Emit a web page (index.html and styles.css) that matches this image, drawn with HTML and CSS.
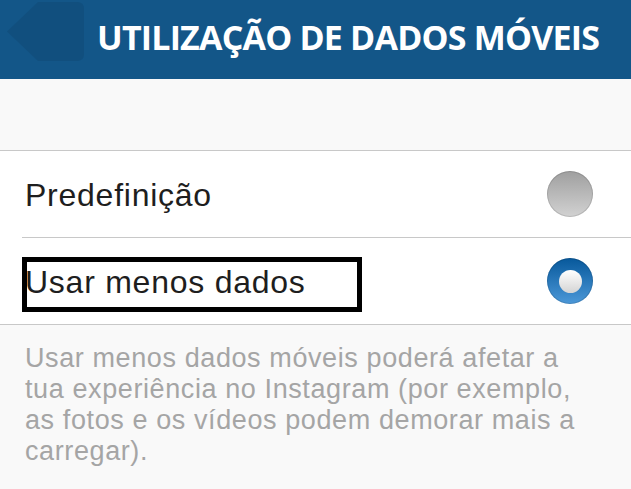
FILE: index.html
```html
<!DOCTYPE html>
<html lang="pt">
<head>
<meta charset="utf-8">
<title>Utilização de dados móveis</title>
<link rel="stylesheet" href="styles.css">
</head>
<body>
<header class="topbar">
  <button class="back" aria-label="Voltar">
    <svg width="78" height="59" viewBox="0 0 78 59">
      <path d="M0 29.5 L31 0 H70 Q77 0 77 7 V52 Q77 59 70 59 H31 Z" fill="#114f7e"/>
    </svg>
  </button>
  <h1 class="title">UTILIZAÇÃO DE DADOS MÓVEIS</h1>
</header>
<main class="content">
  <div class="spacer"></div>
  <ul class="options">
    <li class="option">
      <span class="label">Predefinição</span>
      <span class="radio"></span>
    </li>
    <li class="option marked">
      <span class="label">Usar menos dados</span>
      <span class="radio checked"></span>
    </li>
  </ul>
  <p class="note">Usar menos dados móveis poderá afetar a tua experiência no Instagram (por exemplo, as fotos e os vídeos podem demorar mais a carregar).</p>
</main>
</body>
</html>
```
FILE: styles.css
```css
*, *::before, *::after { box-sizing: border-box; }
html, body { margin: 0; padding: 0; }
body {
  width: 631px;
  height: 489px;
  overflow: hidden;
  background: #f9f9f9;
  font-family: "Liberation Sans", Arial, sans-serif;
}
.topbar {
  height: 79px;
  background: #135688;
  display: flex;
  align-items: center;
  padding-left: 7px;
}
.back {
  border: 0;
  padding: 0;
  margin: -16px 0 0 0;
  background: none;
  width: 78px;
  height: 59px;
  display: block;
}
.back svg { display: block; }
.title {
  margin: -6px 0 0 12px;
  font-family: "Open Sans", sans-serif;
  font-weight: 700;
  font-size: 34px;
  letter-spacing: -0.8px;
  color: #fff;
  white-space: nowrap;
}
.spacer {
  height: 72px;
  border-bottom: 1px solid #c8c8c8;
}
.options {
  list-style: none;
  margin: 0;
  padding: 0 0 0 22px;
  background: #fff;
  border-bottom: 1px solid #c8c8c8;
}
.option {
  position: relative;
  height: 87px;
  display: flex;
  align-items: center;
  justify-content: space-between;
  padding-right: 38px;
  border-bottom: 1px solid #c8c8c8;
}
.option:last-child { border-bottom: 0; height: 86px; }
.marked::after {
  content: "";
  position: absolute;
  left: 0;
  top: 19px;
  width: 340px;
  height: 55px;
  border: 5px solid #000;
}
.label {
  font-size: 32px;
  letter-spacing: 0.75px;
  color: #1e1e1e;
  padding: 3px 0 0 3px;
}
.radio {
  width: 46px;
  height: 46px;
  border-radius: 50%;
  background: linear-gradient(#9f9f9f, #d2d2d2);
  box-shadow: inset 0 0 0 1px rgba(0,0,0,0.12);
  display: flex;
  align-items: center;
  justify-content: center;
}
.radio.checked {
  background: linear-gradient(#07589b, #4c98d8);
}
.radio.checked::after {
  content: "";
  width: 23px;
  height: 23px;
  border-radius: 50%;
  background: linear-gradient(#ffffff, #d4d4d4);
}
.note {
  margin: 0;
  padding: 18px 30px 0 25px;
  font-size: 27px;
  letter-spacing: 0.6px;
  line-height: 31px;
  color: #a5a5a5;
}
```
